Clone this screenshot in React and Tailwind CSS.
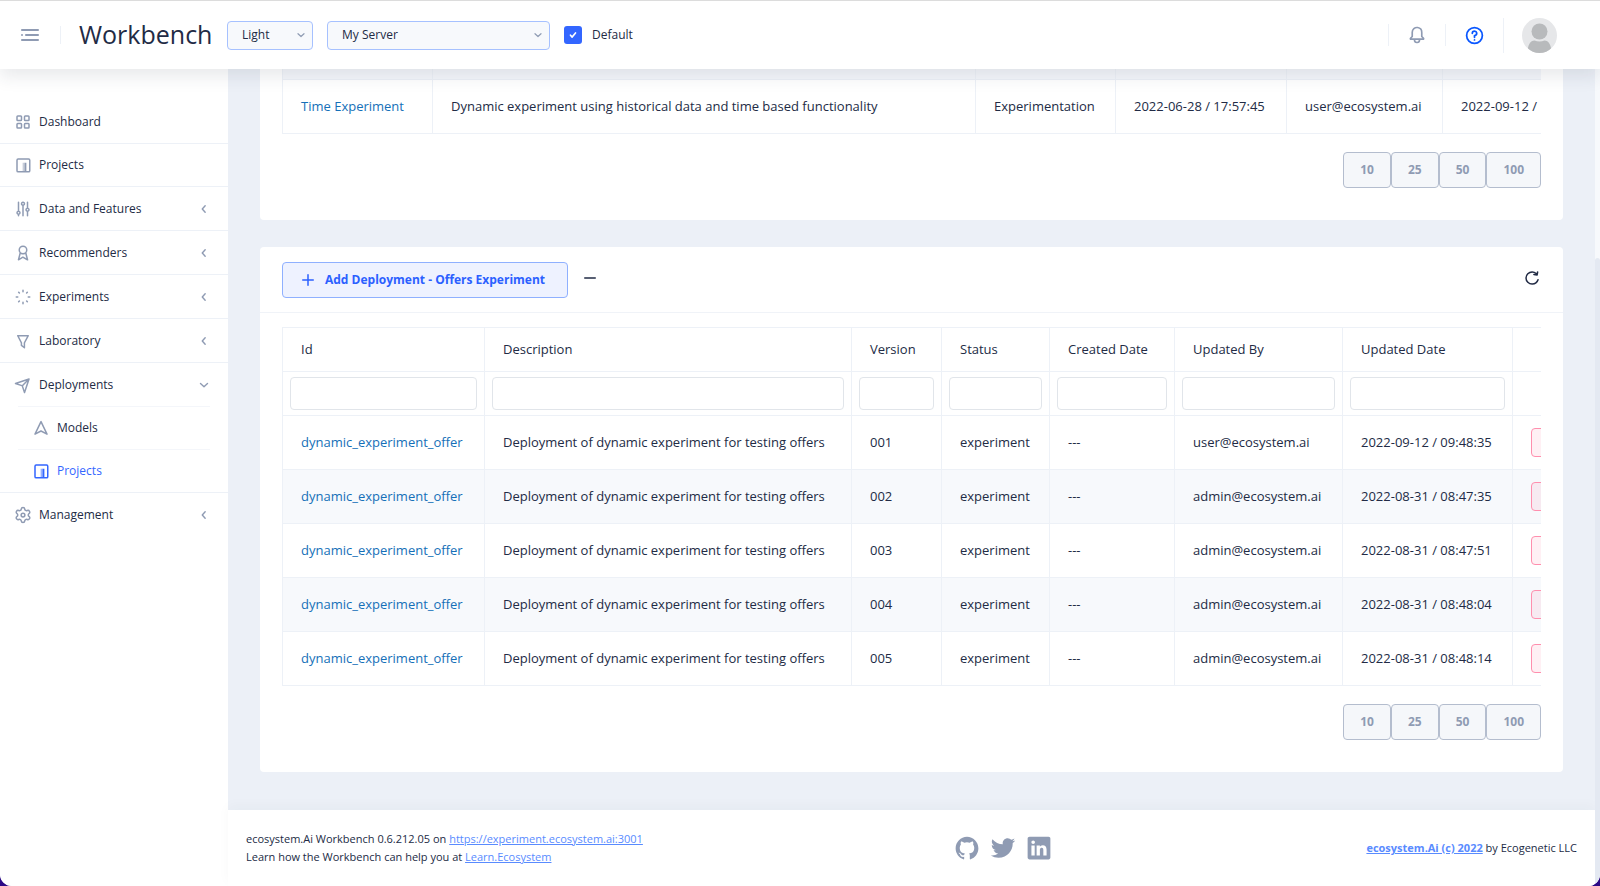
import React from "react";
import { IoLogoGithub, IoLogoLinkedin, IoLogoTwitter } from "react-icons/io5";

const iconPaths = {
  menu: (
    <>
      <circle cx="4" cy="12" r="1" />
      <rect x="7" y="11" width="14" height="2" rx="0.9" />
      <rect x="3" y="16" width="18" height="2" rx="0.9" />
      <rect x="3" y="6" width="18" height="2" rx="0.9" />
    </>
  ),
  bell: (
    <path d="M20.52 15.21l-1.8-1.81V8.94a6.86 6.86 0 0 0-5.82-6.88 6.74 6.74 0 0 0-7.62 6.67v4.67l-1.8 1.81A1.64 1.64 0 0 0 4.64 18H8v.34A3.84 3.84 0 0 0 12 22a3.84 3.84 0 0 0 4-3.66V18h3.36a1.64 1.64 0 0 0 1.16-2.79zM14 18.34A1.88 1.88 0 0 1 12 20a1.88 1.88 0 0 1-2-1.66V18h4zM5.51 16l1.18-1.18a2 2 0 0 0 .59-1.42V8.73A4.73 4.73 0 0 1 8.9 5.17 4.67 4.67 0 0 1 12.64 4a4.86 4.86 0 0 1 4.08 4.9v4.5a2 2 0 0 0 .58 1.42L18.49 16z" />
  ),
  help: (
    <>
      <path d="M12 2a10 10 0 1 0 10 10A10 10 0 0 0 12 2zm0 18a8 8 0 1 1 8-8 8 8 0 0 1-8 8z" />
      <path d="M12 6a3.5 3.5 0 0 0-3.5 3.5 1 1 0 0 0 2 0A1.5 1.5 0 1 1 12 11a1 1 0 0 0-1 1v2a1 1 0 0 0 2 0v-1.16A3.49 3.49 0 0 0 12 6z" />
      <circle cx="12" cy="17" r="1" />
    </>
  ),
  grid: (
    <path d="M9 3H5a2 2 0 0 0-2 2v4a2 2 0 0 0 2 2h4a2 2 0 0 0 2-2V5a2 2 0 0 0-2-2zM5 9V5h4v4zM19 3h-4a2 2 0 0 0-2 2v4a2 2 0 0 0 2 2h4a2 2 0 0 0 2-2V5a2 2 0 0 0-2-2zm-4 6V5h4v4zM9 13H5a2 2 0 0 0-2 2v4a2 2 0 0 0 2 2h4a2 2 0 0 0 2-2v-4a2 2 0 0 0-2-2zm-4 6v-4h4v4zM19 13h-4a2 2 0 0 0-2 2v4a2 2 0 0 0 2 2h4a2 2 0 0 0 2-2v-4a2 2 0 0 0-2-2zm-4 6v-4h4v4z" />
  ),
  project: (
    <>
      <rect x="4" y="4" width="17" height="17" rx="1.5" fill="none" stroke="currentColor" strokeWidth="2" />
      <rect x="11.5" y="9" width="2.5" height="11" opacity="0.5" />
      <rect x="14" y="9" width="2.5" height="11" />
    </>
  ),
  options: (
    <>
      <path d="M7 14.18V3a1 1 0 0 0-2 0v11.18a3 3 0 0 0 0 5.64V21a1 1 0 0 0 2 0v-1.18a3 3 0 0 0 0-5.64zM6 18a1 1 0 1 1 1-1 1 1 0 0 1-1 1z" />
      <path d="M21 13a3 3 0 0 0-2-2.82V3a1 1 0 0 0-2 0v7.18a3 3 0 0 0 0 5.64V21a1 1 0 0 0 2 0v-5.18A3 3 0 0 0 21 13zm-3 1a1 1 0 1 1 1-1 1 1 0 0 1-1 1z" />
      <path d="M15 5a3 3 0 1 0-4 2.82V21a1 1 0 0 0 2 0V7.82A3 3 0 0 0 15 5zm-3 1a1 1 0 1 1 1-1 1 1 0 0 1-1 1z" />
    </>
  ),
  award: (
    <path d="M19 20.75l-2.31-9A5.94 5.94 0 0 0 18 8 6 6 0 0 0 6 8a5.94 5.94 0 0 0 1.34 3.77L5 20.75a1 1 0 0 0 1.48 1.11l5.33-3.13 5.68 3.14A.91.91 0 0 0 18 22a1 1 0 0 0 1-1.25zM12 4a4 4 0 1 1-4 4 4 4 0 0 1 4-4zm.31 12.71a1 1 0 0 0-1 0l-3.75 2.2L9 13.21a5.94 5.94 0 0 0 5.92 0L16.45 19z" />
  ),
  loader: (
    <path
      d="M12 3v2M12 19v2M3 12h2M19 12h2M6.2 5.6l1 1.1M17.8 5.6l-1 1.1M6.2 18.4l1-1.1M17.8 18.4l-1-1.1"
      stroke="currentColor"
      strokeWidth="2"
      strokeLinecap="round"
    />
  ),
  funnel: (
    <path d="M13.9 22a1 1 0 0 1-.6-.2l-4-3.05a1 1 0 0 1-.39-.8v-3.27l-4.8-9.22A1 1 0 0 1 5 4h14a1 1 0 0 1 .86.49 1 1 0 0 1 0 1l-5 9.21V21a1 1 0 0 1-.55.9 1 1 0 0 1-.41.1zm-3-4.54l2 1.53v-4.55A1 1 0 0 1 13 14l4.3-8H6.64l4.13 8a1 1 0 0 1 .11.46z" />
  ),
  plane: (
    <path d="M21 4a1.31 1.31 0 0 0-.06-.27v-.09a1 1 0 0 0-.2-.3 1 1 0 0 0-.29-.19h-.09a.86.86 0 0 0-.31-.15H20a1 1 0 0 0-.3 0l-18 6a1 1 0 0 0 0 1.9l8.53 2.84 2.84 8.53a1 1 0 0 0 1.9 0l6-18A1 1 0 0 0 21 4zm-4.7 2.29l-5.57 5.57L5.16 10zM14 18.84l-1.86-5.57 5.57-5.57z" />
  ),
  navigation: (
    <path
      d="M12 3.5L4 20.2l8-4.2 8 4.2z"
      fill="none"
      stroke="currentColor"
      strokeWidth="2"
      strokeLinejoin="round"
    />
  ),
  gear: (
    <g fill="none" stroke="currentColor" strokeWidth="2" strokeLinejoin="round">
      <path d="M9.671 4.136a2.34 2.34 0 0 1 4.659 0 2.34 2.34 0 0 0 3.319 1.915 2.34 2.34 0 0 1 2.33 4.033 2.34 2.34 0 0 0 0 3.831 2.34 2.34 0 0 1-2.33 4.033 2.34 2.34 0 0 0-3.319 1.915 2.34 2.34 0 0 1-4.659 0 2.34 2.34 0 0 0-3.32-1.915 2.34 2.34 0 0 1-2.33-4.033 2.34 2.34 0 0 0 0-3.831A2.34 2.34 0 0 1 6.35 6.051a2.34 2.34 0 0 0 3.319-1.915" />
      <circle cx="12" cy="12" r="2.5" />
    </g>
  ),
  refresh: (
    <path d="M20.3 13.43a1 1 0 0 0-1.25.65A7.14 7.14 0 0 1 12.18 19 7.1 7.1 0 0 1 5 12a7.1 7.1 0 0 1 7.18-7 7.26 7.26 0 0 1 4.65 1.67l-2.17-.36a1 1 0 0 0-1.15.83 1 1 0 0 0 .83 1.15l4.24.7h.17a1 1 0 0 0 .34-.06.33.33 0 0 0 .1-.06.78.78 0 0 0 .2-.11l.09-.11c0-.05.09-.09.13-.15s0-.1.05-.14a1.34 1.34 0 0 0 .07-.18l.75-4a1 1 0 0 0-2-.38l-.27 1.45A9.21 9.21 0 0 0 12.18 3 9.1 9.1 0 0 0 3 12a9.1 9.1 0 0 0 9.18 9A9.12 9.12 0 0 0 21 14.68a1 1 0 0 0-.7-1.25z" />
  ),
  plus: <path d="M19 11h-6V5a1 1 0 0 0-2 0v6H5a1 1 0 0 0 0 2h6v6a1 1 0 0 0 2 0v-6h6a1 1 0 0 0 0-2z" />,
  minus: <path d="M19 13H5a1 1 0 0 1 0-2h14a1 1 0 0 1 0 2z" />,
  down: (
    <path d="M6 9.5l6 5.5 6-5.5" fill="none" stroke="currentColor" strokeWidth="2.4" strokeLinecap="round" strokeLinejoin="round" />
  ),
  left: (
    <path d="M14 6.5L9 12l5 5.5" fill="none" stroke="currentColor" strokeWidth="2.4" strokeLinecap="round" strokeLinejoin="round" />
  ),
  check: (
    <path d="M6 12.5l4 4.5 8-10" fill="none" stroke="currentColor" strokeWidth="4" strokeLinecap="round" strokeLinejoin="round" />
  ),
};

const Icon = ({ name, className }) => (
  <svg viewBox="0 0 24 24" fill="currentColor" className={className} aria-hidden="true">
    {iconPaths[name]}
  </svg>
);

const menuItems = [
  { label: "Dashboard", icon: "grid" },
  { label: "Projects", icon: "project" },
  { label: "Data and Features", icon: "options", group: true },
  { label: "Recommenders", icon: "award", group: true },
  { label: "Experiments", icon: "loader", group: true },
  { label: "Laboratory", icon: "funnel", group: true },
  {
    label: "Deployments",
    icon: "plane",
    group: true,
    children: [
      { label: "Models", icon: "navigation" },
      { label: "Projects", icon: "project", active: true },
    ],
  },
  { label: "Management", icon: "gear", group: true },
];

const columns = [
  { title: "Id", width: "w-[202px]" },
  { title: "Description", width: "w-[367px]" },
  { title: "Version", width: "w-[90px]" },
  { title: "Status", width: "w-[108px]" },
  { title: "Created Date", width: "w-[125px]" },
  { title: "Updated By", width: "w-[168px]" },
  { title: "Updated Date", width: "w-[170px]" },
];

const deployments = [
  { version: "001", user: "user@ecosystem.ai", updated: "2022-09-12 / 09:48:35" },
  { version: "002", user: "admin@ecosystem.ai", updated: "2022-08-31 / 08:47:35" },
  { version: "003", user: "admin@ecosystem.ai", updated: "2022-08-31 / 08:47:51" },
  { version: "004", user: "admin@ecosystem.ai", updated: "2022-08-31 / 08:48:04" },
  { version: "005", user: "admin@ecosystem.ai", updated: "2022-08-31 / 08:48:14" },
];

const Select = ({ label, value, className }) => (
  <div className={`relative ${className}`}>
    <select
      aria-label={label}
      className="h-[29px] w-full appearance-none rounded border border-[#a6c1ff] bg-[#f7f9fc] pl-3.5 pr-8 text-xs font-medium text-[#222b45]"
    >
      <option>{value}</option>
    </select>
    <Icon name="down" className="pointer-events-none absolute right-1.5 top-2 size-3 text-[#8f9bb3]" />
  </div>
);

const Header = () => (
  <header className="relative z-20 flex h-[69px] shrink-0 items-center border-t border-[#dcdcdc] bg-white pl-[18px] pr-[43px] shadow-[0_8px_16px_rgba(44,51,73,0.1)]">
    <button type="button" aria-label="Toggle menu" className="text-[#8f9bb3]">
      <Icon name="menu" className="size-6" />
    </button>
    <span className="ml-[18px] h-[18px] w-px bg-[#edf1f7]" />
    <a href="#" className="ml-[18px] w-[131px] whitespace-nowrap text-[25px] text-[#222b45]">
      Workbench
    </a>
    <Select label="Theme" value="Light" className="ml-[17px] w-[86px]" />
    <Select label="Server" value="My Server" className="ml-3.5 w-[223px]" />
    <label className="ml-3.5 flex items-center gap-2.5 text-xs text-[#222b45]">
      <span className="relative flex">
        <input type="checkbox" defaultChecked className="size-[18px] appearance-none rounded-[3px] bg-[#3366ff]" />
        <Icon name="check" className="pointer-events-none absolute left-1 top-1 size-2.5 text-white" />
      </span>
      Default
    </label>
    <div className="ml-auto flex items-center">
      <span className="h-[22px] w-px bg-[#edf1f7]" />
      <button type="button" aria-label="Notifications" className="px-[18px] text-[#8f9bb3]">
        <Icon name="bell" className="size-5" />
      </button>
      <span className="h-[22px] w-px bg-[#edf1f7]" />
      <button type="button" aria-label="Help" className="px-[18px] text-[#0a57ff]">
        <Icon name="help" className="size-[21px]" />
      </button>
      <span className="h-[35px] w-px bg-[#edf1f7]" />
      <button type="button" aria-label="Profile" className="ml-[18px]">
        <svg viewBox="0 0 35 35" className="size-[35px]" aria-hidden="true">
          <defs>
            <clipPath id="avatar">
              <circle cx="17.5" cy="17.5" r="17.5" />
            </clipPath>
          </defs>
          <g clipPath="url(#avatar)">
            <rect width="35" height="35" fill="#e6e7e9" />
            <circle cx="17.5" cy="13.5" r="8" fill="#b8babc" />
            <path d="M5.500 35c0-8 3-12.500 7-12.500 3 1.300 7 1.300 10 0 4 0 7 4.500 7 12.500z" fill="#b8babc" />
          </g>
        </svg>
      </button>
    </div>
  </header>
);

const Sidebar = () => (
  <aside className="w-[228px] shrink-0 bg-white pt-8 text-xs text-[#222b45] shadow-[0_8px_16px_rgba(44,51,73,0.1)]">
    <ul>
      {menuItems.map((item) => (
        <li key={item.label} className="border-b border-[#edf1f7] last:border-b-0">
          <a href="#" className={`flex items-center pl-3.5 pr-[17px] ${item.group ? "h-[43px]" : "h-[42px]"}`}>
            <Icon name={item.icon} className="mr-[7px] size-[18px] text-[#8f9bb3]" />
            {item.label}
            {item.group && (
              <Icon name={item.children ? "down" : "left"} className="ml-auto size-3.5 text-[#8f9bb3]" />
            )}
          </a>
          {item.children && (
            <ul className="mx-[18px]">
              {item.children.map((child) => (
                <li key={child.label} className="border-t border-[#f4f6fa]">
                  <a
                    href="#"
                    className={`flex h-[42px] items-center pl-3.5 ${child.active ? "text-[#3366ff]" : ""}`}
                  >
                    <Icon
                      name={child.icon}
                      className={`mr-[7px] size-[18px] ${child.active ? "text-[#3366ff]" : "text-[#8f9bb3]"}`}
                    />
                    {child.label}
                  </a>
                </li>
              ))}
            </ul>
          )}
        </li>
      ))}
    </ul>
  </aside>
);

const Pager = () => (
  <div className="mt-[18px] flex justify-end">
    {[10, 25, 50, 100].map((size) => (
      <button
        key={size}
        type="button"
        className="h-9 rounded border border-[#b4bdce] bg-[#f5f7fa] px-4 text-xs font-bold text-[#8f9bb3]"
      >
        {size}
      </button>
    ))}
  </div>
);

const cell = "border border-[#edf1f7] pl-[18px] pr-3 pt-0.5 whitespace-nowrap";

const ExperimentsCard = () => (
  <section className="rounded-b bg-white px-[22px] pb-8">
    <div className="overflow-hidden">
      <table className="w-[1420px] table-fixed border-collapse text-[13px]">
        <colgroup>
          <col className="w-[150px]" />
          <col className="w-[543px]" />
          <col className="w-[140px]" />
          <col className="w-[171px]" />
          <col className="w-[156px]" />
          <col />
        </colgroup>
        <tbody>
          <tr className="h-[10px] bg-[#f5f7fb]">
            {[0, 1, 2, 3, 4, 5].map((i) => (
              <td key={i} className="border-x border-[#edf1f7]" />
            ))}
          </tr>
          <tr className="h-[54px]">
            <td className={cell}>
              <a href="#" className="text-[#1570b8]">
                Time Experiment
              </a>
            </td>
            <td className={cell}>Dynamic experiment using historical data and time based functionality</td>
            <td className={cell}>Experimentation</td>
            <td className={cell}>2022-06-28 / 17:57:45</td>
            <td className={cell}>user@ecosystem.ai</td>
            <td className={cell}>2022-09-12 /</td>
          </tr>
        </tbody>
      </table>
    </div>
    <Pager />
  </section>
);

const DeploymentsCard = () => (
  <section className="mt-[27px] rounded bg-white">
    <div className="flex items-center border-b border-[#f0f3f8] px-[22px] pb-[14px] pt-[15px]">
      <button
        type="button"
        className="flex h-9 items-center gap-2 rounded border border-[#8fb0ff] bg-[#eef2ff] pl-4 pr-[22px] text-xs font-bold text-[#2b60ff]"
      >
        <Icon name="plus" className="size-[18px]" />
        Add Deployment - Offers Experiment
      </button>
      <button type="button" aria-label="Collapse" className="ml-[13px] pb-1 text-[#222b45]">
        <Icon name="minus" className="size-[18px]" />
      </button>
      <button type="button" aria-label="Refresh" className="ml-auto pb-1 text-[#222b45]">
        <Icon name="refresh" className="size-[18px]" />
      </button>
    </div>
    <div className="px-[22px] pb-8 pt-[14px]">
      <div className="overflow-hidden">
        <table className="w-[1430px] table-fixed border-collapse text-[13px]">
          <colgroup>
            {columns.map((col) => (
              <col key={col.title} className={col.width} />
            ))}
            <col />
          </colgroup>
          <thead>
            <tr className="h-11">
              {columns.map((col) => (
                <th key={col.title} className={`${cell} text-left font-normal`}>
                  {col.title}
                </th>
              ))}
              <th className={cell} />
            </tr>
            <tr className="h-11">
              {columns.map((col) => (
                <th key={col.title} className="border border-[#edf1f7] px-[7px]">
                  <input
                    type="text"
                    aria-label={col.title}
                    className="block h-[33px] w-full rounded border border-[#e1e5ea] bg-white px-2 font-normal"
                  />
                </th>
              ))}
              <th className={cell} />
            </tr>
          </thead>
          <tbody>
            {deployments.map((row) => (
              <tr key={row.version} className="h-[54px] even:bg-[#f7f9fc]">
                <td className={cell}>
                  <a href="#" className="text-[#1570b8]">
                    dynamic_experiment_offer
                  </a>
                </td>
                <td className={cell}>Deployment of dynamic experiment for testing offers</td>
                <td className={cell}>{row.version}</td>
                <td className={cell}>experiment</td>
                <td className={cell}>---</td>
                <td className={cell}>{row.user}</td>
                <td className={cell}>{row.updated}</td>
                <td className="border border-[#edf1f7] pl-[18px]">
                  <button
                    type="button"
                    aria-label="Delete"
                    className="block h-[29px] w-20 rounded border border-[#ff8fae] bg-[#ff3d71]/8"
                  />
                </td>
              </tr>
            ))}
          </tbody>
        </table>
      </div>
      <Pager />
    </div>
  </section>
);

const Footer = () => (
  <footer className="grid flex-1 grid-cols-3 items-center bg-white px-[18px] text-[11px] leading-[18px] shadow-[0_-4px_12px_rgba(44,51,73,0.03)]">
    <div className="whitespace-nowrap">
      <p>
        ecosystem.Ai Workbench 0.6.212.05 on{" "}
        <a href="#" className="text-[#598bff] underline">
          https://experiment.ecosystem.ai:3001
        </a>
      </p>
      <p>
        Learn how the Workbench can help you at{" "}
        <a href="#" className="text-[#598bff] underline">
          Learn.Ecosystem
        </a>
      </p>
    </div>
    <div className="flex items-center justify-center gap-2.5 pl-46 text-[#8f9bb3]">
      <a href="#" aria-label="GitHub">
        <IoLogoGithub className="size-[26px]" />
      </a>
      <a href="#" aria-label="Twitter">
        <IoLogoTwitter className="size-[26px]" />
      </a>
      <a href="#" aria-label="LinkedIn">
        <IoLogoLinkedin className="size-[26px]" />
      </a>
    </div>
    <p className="text-right">
      <a href="#" className="font-bold text-[#598bff] underline">
        ecosystem.Ai (c) 2022
      </a>{" "}
      by Ecogenetic LLC
    </p>
  </footer>
);

const App = () => {
  return (
    <div className="bg-[#2c0a86] font-['Open_Sans','Noto_Sans',sans-serif] text-[#222b45]">
      <div className="flex min-h-screen flex-col overflow-hidden rounded-b-xl bg-white">
        <Header />
        <div className="flex flex-1">
          <Sidebar />
          <div className="flex min-w-0 flex-1 flex-col bg-[#ecf0f7]">
            <main className="px-8 pb-[38px]">
              <ExperimentsCard />
              <DeploymentsCard />
            </main>
            <Footer />
          </div>
          <div className="flex w-[5px] shrink-0 flex-col bg-[#f7f9fc] pt-[189px]">
            <div className="flex-1 rounded-t bg-[#e4e9f2]" />
          </div>
        </div>
      </div>
    </div>
  );
};

export default App;
